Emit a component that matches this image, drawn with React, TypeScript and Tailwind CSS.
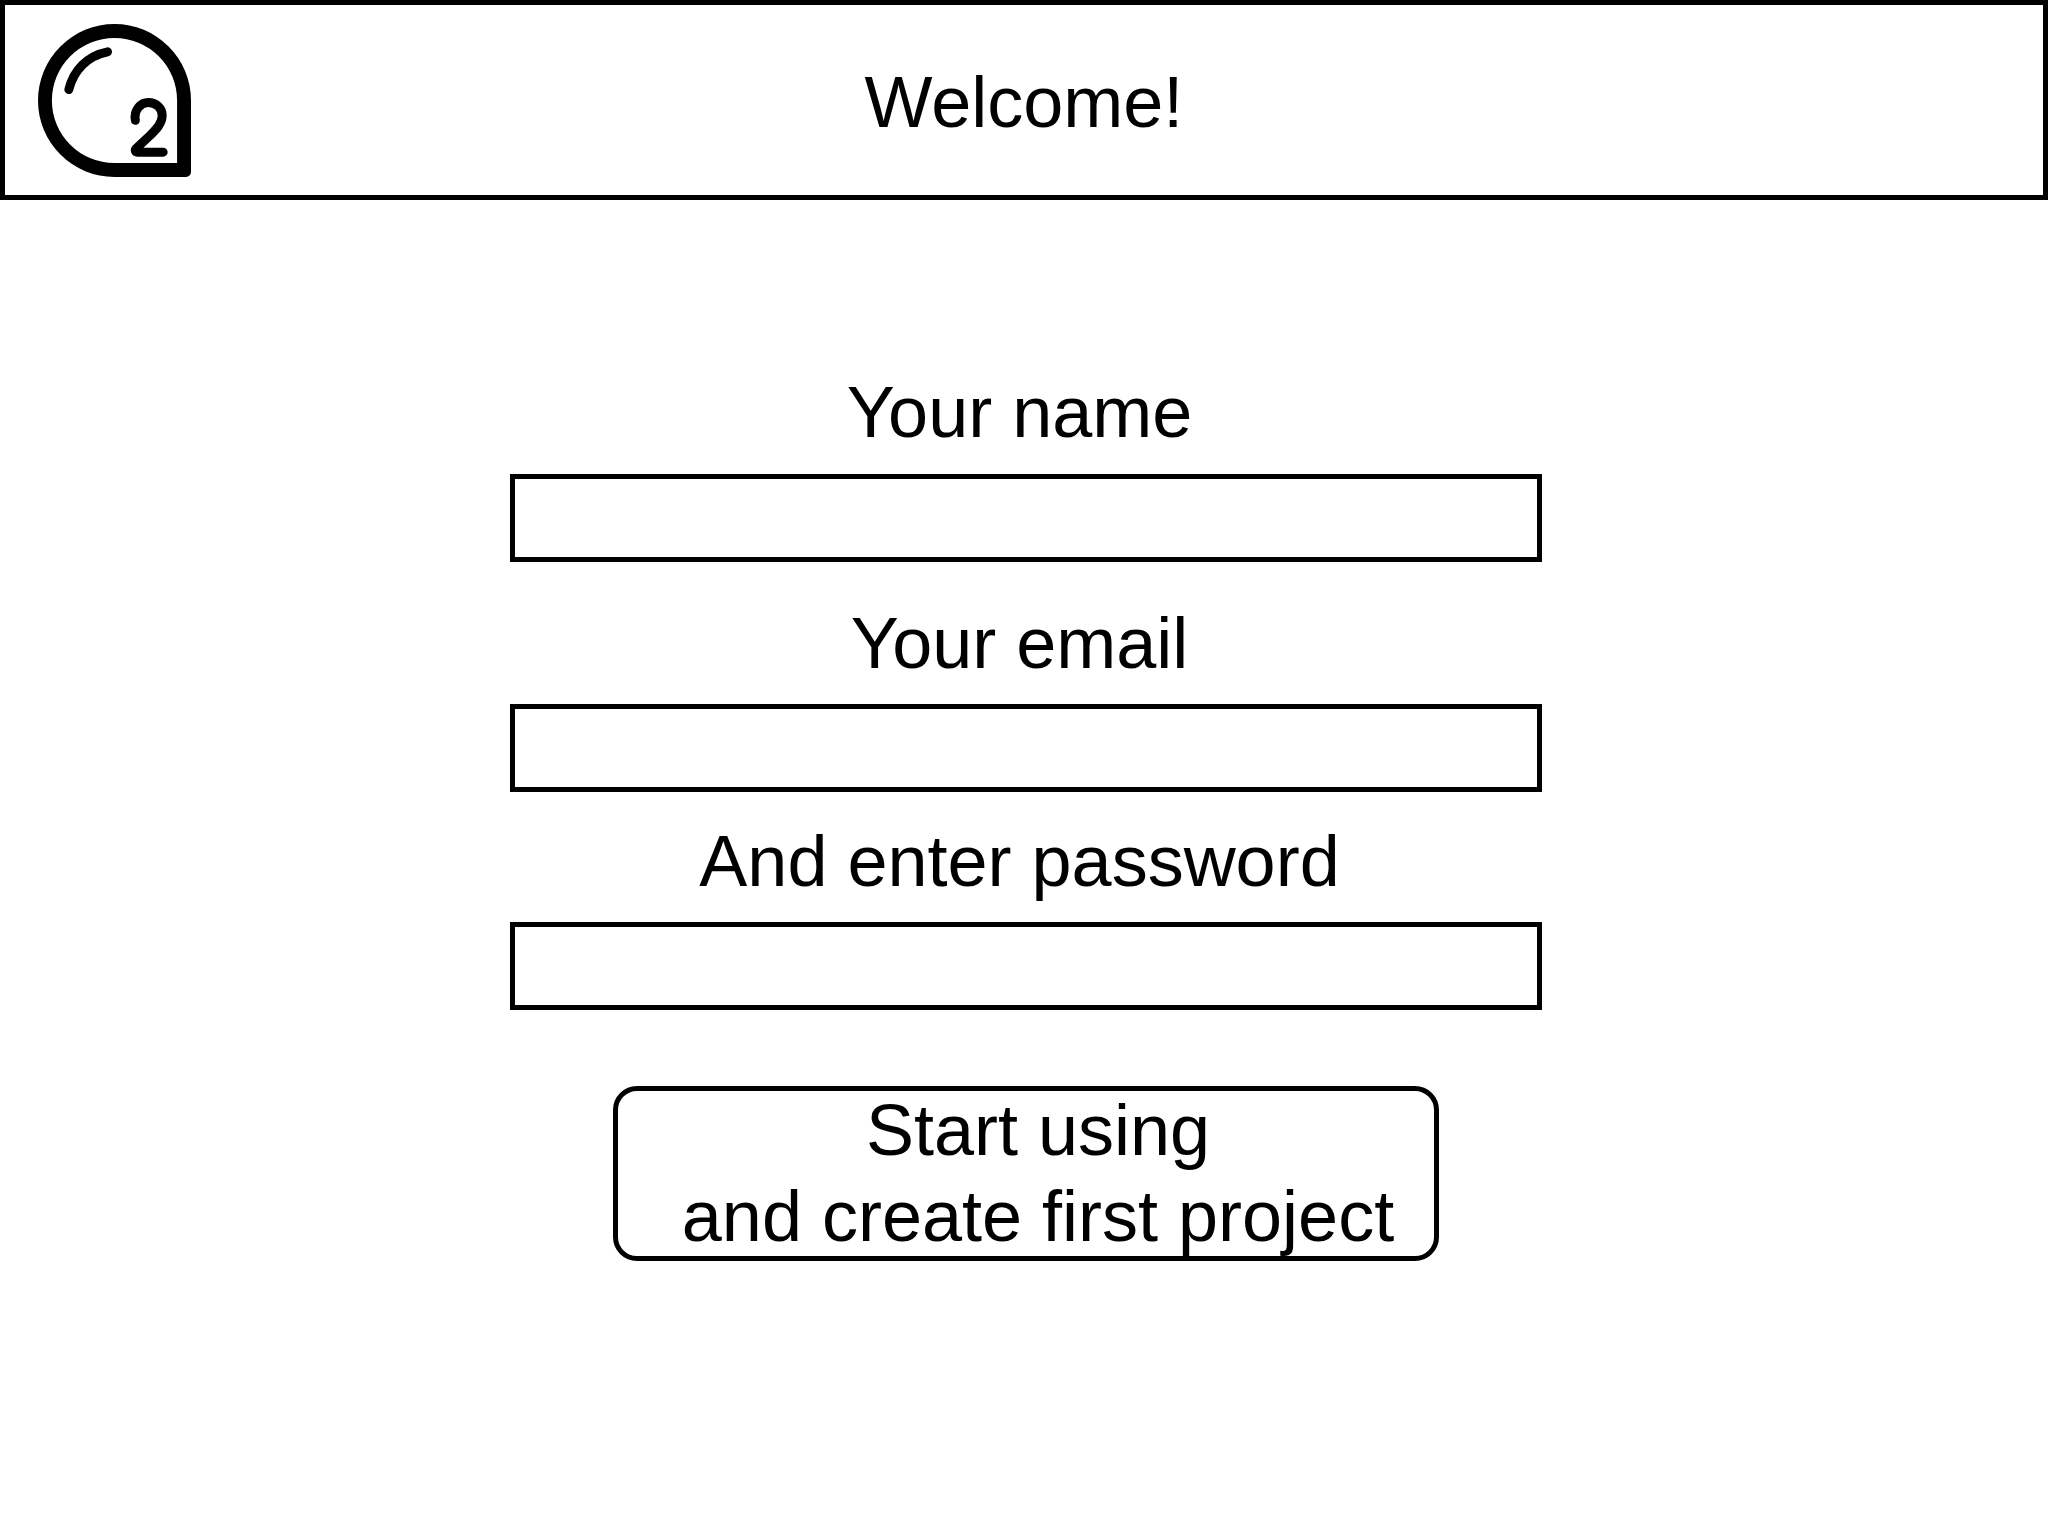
export default function App() {
  const font = "font-['Liberation_Sans',Arial,sans-serif]";
  return (
    <div className={`${font} w-[2049px] h-[1537px] bg-white text-black text-[72px] leading-[86px]`}>
      <header className="relative w-[2048px] h-[200px] border-[5px] border-black flex items-center justify-center pt-[4px]">
        <svg className="absolute left-[33px] top-[19px]" width="153" height="153" viewBox="0 0 154 154" fill="none">
          <path
            fillRule="evenodd"
            fill="black"
            d="M77 0 A77 77 0 0 1 154 77 V149 A5 5 0 0 1 149 154 H77 A77 77 0 0 1 77 0 Z M77 14 A63 63 0 0 0 77 140 H140 V77 A63 63 0 0 0 77 14 Z"
          />
          <path d="M70 28 C50 32 36 46 31 66" stroke="black" strokeWidth="9" strokeLinecap="round" />
          <path
            d="M98 97 C96 86 104 79 111 79 C119 79 125 85 125 92 C125 100 119 106 113 112 L99 125 C97 127 98 129 100 129 L126 129"
            stroke="black"
            strokeWidth="9"
            strokeLinecap="round"
            strokeLinejoin="round"
          />
        </svg>
        <h1 className="font-normal">Welcome!</h1>
      </header>
      <main className="w-[1032px] ml-[510px] flex flex-col pt-[169px]">
        <label className="h-[105px] text-center pr-[13px]">Your name</label>
        <input className="h-[88px] border-[5px] border-black" />
        <label className="h-[142px] pt-[38px] text-center pr-[13px]">Your email</label>
        <input className="h-[88px] border-[5px] border-black" />
        <label className="h-[130px] pt-[26px] text-center pr-[13px]">And enter password</label>
        <input className="h-[88px] border-[5px] border-black" />
        <button className="mt-[76px] ml-[103px] w-[826px] h-[175px] border-[5px] border-black rounded-[24px] text-center pl-[24px] leading-[86px] flex flex-col items-center justify-start">
          <span className="-mt-[4px]">Start using</span>
          <span>and create first project</span>
        </button>
      </main>
    </div>
  );
}
